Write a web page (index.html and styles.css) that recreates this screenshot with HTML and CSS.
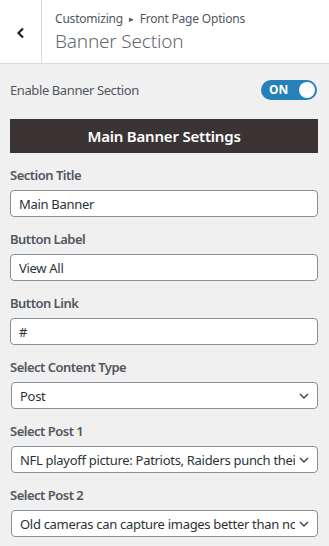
FILE: index.html
```html
<!DOCTYPE html>
<html>
<head>
    <title>Banner Section</title>
    <link rel="stylesheet" href="styles.css">
</head>
<body>
    <div class="header">
        <button class="back" aria-label="Back">
            <svg width="10" height="12" viewBox="0 0 10 12"><path d="M7 1.5 L2.5 6 L7 10.5" fill="none" stroke="#1d2327" stroke-width="2.2"/></svg>
        </button>
        <div class="title">
            <div class="crumbs">Customizing <span class="sep">&#9656;</span> Front Page Options</div>
            <h1>Banner Section</h1>
        </div>
    </div>

    <div class="panel">
        <div class="toggle-row">
            <span class="toggle-label">Enable Banner Section</span>
            <span class="switch"><span class="on">ON</span><span class="knob"></span></span>
        </div>

        <div class="group-title">Main Banner Settings</div>

        <div class="field">
            <label for="title">Section Title</label>
            <input type="text" id="title" value="Main Banner">
        </div>

        <div class="field">
            <label for="btn-label">Button Label</label>
            <input type="text" id="btn-label" value="View All">
        </div>

        <div class="field">
            <label for="btn-link">Button Link</label>
            <input type="text" id="btn-link" value="#">
        </div>

        <div class="field">
            <label for="type">Select Content Type</label>
            <div class="select-wrap">
                <select id="type"><option>Post</option></select>
                <svg class="caret" width="10" height="6" viewBox="0 0 10 6"><path d="M1 1 L5 5 L9 1" fill="none" stroke="#3c434a" stroke-width="1.4"/></svg>
            </div>
        </div>

        <div class="field">
            <label for="post1">Select Post 1</label>
            <div class="select-wrap">
                <select id="post1"><option>NFL playoff picture: Patriots, Raiders punch their tickets</option></select>
                <svg class="caret" width="10" height="6" viewBox="0 0 10 6"><path d="M1 1 L5 5 L9 1" fill="none" stroke="#3c434a" stroke-width="1.4"/></svg>
            </div>
        </div>

        <div class="field">
            <label for="post2">Select Post 2</label>
            <div class="select-wrap">
                <select id="post2"><option>Old cameras can capture images better than nowadays</option></select>
                <svg class="caret" width="10" height="6" viewBox="0 0 10 6"><path d="M1 1 L5 5 L9 1" fill="none" stroke="#3c434a" stroke-width="1.4"/></svg>
            </div>
        </div>
    </div>
</body>
</html>
```

FILE: styles.css
```css
* {
    margin: 0;
    padding: 0;
    box-sizing: border-box;
}

body {
    font-family: "Noto Sans", "Open Sans", sans-serif;
    background-color: #f0f0f1;
    color: #50575e;
}

.header {
    display: flex;
    height: 64px;
    background-color: #fff;
    border-bottom: 1px solid #dcdcde;
}

.back {
    width: 42px;
    border: none;
    border-right: 1px solid #dcdcde;
    background: #fff;
    display: flex;
    align-items: center;
    justify-content: center;
    padding-top: 2px;
}

.title {
    padding: 10px 0 0 13px;
}

.crumbs {
    font-size: 12px;
    color: #50575e;
    letter-spacing: -0.2px;
}

.sep {
    font-size: 9px;
    margin: 0 3px;
    position: relative;
    top: -1px;
}

h1 {
    font-size: 19px;
    font-weight: 300;
    color: #646970;
    margin-top: 1px;
    letter-spacing: -0.2px;
}

.panel {
    padding: 15px 11px 0 10px;
}

.toggle-row {
    display: flex;
    align-items: center;
    justify-content: space-between;
    height: 21px;
}

.toggle-label {
    font-size: 13px;
    color: #50575e;
    letter-spacing: -0.4px;
}

.switch {
    position: relative;
    width: 56px;
    height: 20px;
    border-radius: 10px;
    background-color: #2680b9;
    margin-right: 1px;
}

.on {
    position: absolute;
    left: 8px;
    top: 1px;
    font-size: 12px;
    font-weight: bold;
    color: #fff;
}

.knob {
    position: absolute;
    right: 2px;
    top: 2px;
    width: 16px;
    height: 16px;
    border-radius: 50%;
    background-color: #fff;
}

.group-title {
    margin-top: 19px;
    height: 34px;
    background-color: #3b3435;
    color: #fff;
    font-size: 15px;
    font-weight: 600;
    text-align: center;
    line-height: 34px;
    letter-spacing: -0.2px;
}

.field {
    margin-top: 13px;
}

label {
    display: block;
    font-size: 13px;
    font-weight: 600;
    color: #50575e;
    line-height: 18px;
    margin-bottom: 6px;
    letter-spacing: -0.5px;
}

input, select {
    width: 100%;
    height: 27px;
    border: 1px solid #8c8f94;
    border-radius: 4px;
    background-color: #fff;
    font-family: inherit;
    font-size: 13px;
    color: #2c3338;
    padding: 0 8px;
    letter-spacing: -0.3px;
}

.select-wrap {
    position: relative;
    margin-left: 1px;
}

select {
    appearance: none;
    padding-right: 22px;
}

.caret {
    position: absolute;
    right: 9px;
    top: 11px;
    pointer-events: none;
}
```
